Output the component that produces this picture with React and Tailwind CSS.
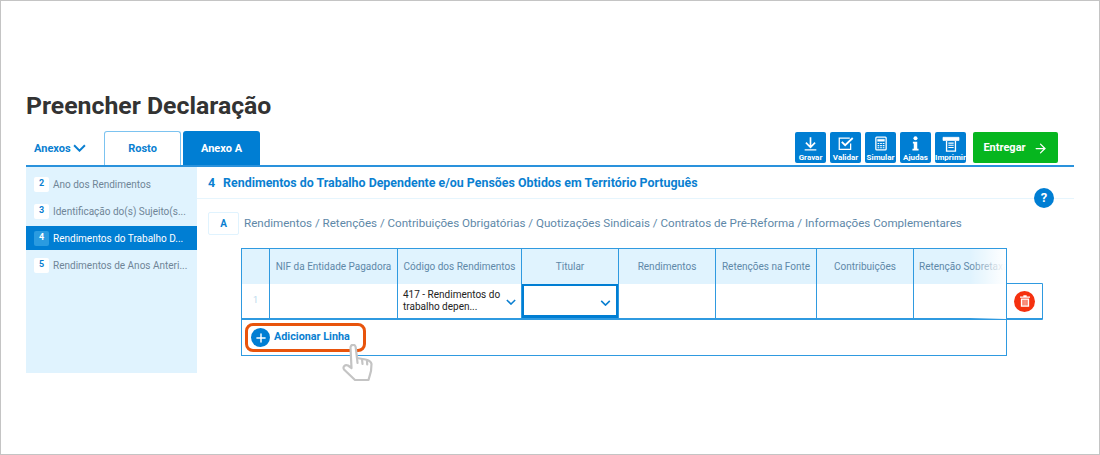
import React from 'react';
import { ArrowRight, Plus } from 'lucide-react';

const sections = [
  { n: 2, label: 'Ano dos Rendimentos' },
  { n: 3, label: 'Identificação do(s) Sujeito(s...' },
  { n: 4, label: 'Rendimentos do Trabalho D...', active: true },
  { n: 5, label: 'Rendimentos de Anos Anteri...' },
];

const GravarIcon = () => (
  <svg width="15" height="15" viewBox="0 0 18 17" fill="none" stroke="currentColor" strokeWidth="2">
    <path d="M9 1v11M3.500 7.500 9 13l5.500-5.500" />
    <path d="M2 16h14" strokeWidth="1.500" />
  </svg>
);

const ValidarIcon = () => (
  <svg width="16" height="15" viewBox="0 0 19 17" fill="none" stroke="currentColor">
    <path d="M15 8.500V15.500H1.500V2H14" strokeWidth="1.500" />
    <path d="M4.500 6.500 8.500 10.500 17.500 2" strokeWidth="2.200" />
  </svg>
);

const SimularIcon = () => (
  <svg width="12" height="15" viewBox="0 0 14 17" fill="none" stroke="currentColor">
    <rect x="1" y="1" width="12" height="15" rx="1" strokeWidth="1.500" />
    <path d="M3 3.500h8V6H3z" fill="currentColor" strokeWidth="0.500" />
    <path d="M3 8.500h2M6 8.500h2M9 8.500h2M3 11h2M6 11h2M9 11h2M3 13.500h2M6 13.500h2M9 13.500h2" strokeWidth="1.300" />
  </svg>
);

const AjudasIcon = () => (
  <svg width="7" height="15" viewBox="0 0 8 17" fill="currentColor">
    <circle cx="4" cy="2.500" r="2.300" />
    <path d="M1 6.500h5v8h1.500V16.500H.5V14.500H2V8.500H1z" />
  </svg>
);

const ImprimirIcon = () => (
  <svg width="18" height="16" viewBox="0 0 20 18" fill="none" stroke="currentColor">
    <path d="M1 1.500h18V5H1z" fill="currentColor" strokeWidth="0.800" />
    <path d="M5 5.500v11.500h10V5.500" strokeWidth="1.500" />
    <path d="M7 8h6M7 10.500h6M7 13h6" strokeWidth="1.200" />
  </svg>
);

const tools = [
  { label: 'Gravar', icon: <GravarIcon /> },
  { label: 'Validar', icon: <ValidarIcon /> },
  { label: 'Simular', icon: <SimularIcon /> },
  { label: 'Ajudas', icon: <AjudasIcon /> },
  { label: 'Imprimir', icon: <ImprimirIcon /> },
];

const headers = [
  { label: 'NIF da Entidade Pagadora', w: 'w-[128px]' },
  { label: 'Código dos Rendimentos', w: 'w-[124px]' },
  { label: 'Titular', w: 'w-[97px]' },
  { label: 'Rendimentos', w: 'w-[97px]' },
  { label: 'Retenções na Fonte', w: 'w-[101px]' },
  { label: 'Contribuições', w: 'w-[97px]' },
];

const Chevron = ({ className, w = 12, h = 7 }) => (
  <svg width={w} height={h} viewBox="0 0 12 7" fill="none" stroke="currentColor" strokeWidth="1.800" className={className}>
    <path d="M1 1l5 5 5-5" />
  </svg>
);

const TrashIcon = () => (
  <svg width="10" height="12" viewBox="0 0 12 14" fill="currentColor">
    <path d="M4 0h4v1.500h4V3H0V1.500h4z" />
    <path fillRule="evenodd" d="M1 4h10v10H1zM3 5.500v7h1.300v-7zM5.350 5.500v7h1.300v-7zM7.700 5.500v7H9v-7z" />
  </svg>
);

const HandCursor = () => (
  <svg width="32" height="38" viewBox="0 0 32 38" fill="#fff" stroke="#c4c4c4" strokeWidth="2.200" strokeLinejoin="round" strokeLinecap="round">
    <path d="M9.500 24 8.500 3.500a2.600 2.600 0 0 1 5.200-.2L15 14l8.500 1.500c3.500.8 5.500 1.500 6 4.500l-.5 7-2.500 9H13L2 25.500c-1.500-2.500 1-5.500 4-4z" />
    <path d="M15 14l.5 5M20 15l.5 5M25 16.500l.2 4" />
  </svg>
);

export default function App() {
  return (
    <div className="w-[1100px] h-[455px] overflow-hidden bg-white border border-[#c4c4c4] font-['Roboto',sans-serif]">
      <div className="pl-[25px] pr-[25px] pt-[91px]">
        <h1 className="text-[24.800px] leading-[28px] font-bold text-[#333333]">Preencher Declaração</h1>

        {/* Tabs and toolbar */}
        <div className="flex items-end h-[34px] mt-[11px]">
          <div className="w-[78px] h-[33px] pl-[8px] pt-[1px] flex items-center gap-[2px] text-[11px] font-bold text-[#0a7fd1]">
            Anexos <Chevron w={13} h={8} className="-mt-[2px]" />
          </div>
          <div className="w-[77px] h-[34px] pt-[2px] flex items-center justify-center border border-b-0 border-[#7cc3f0] rounded-t-[3px] text-[11px] font-bold text-[#0a7fd1]">
            Rosto
          </div>
          <div className="w-[77px] h-[34px] pt-[2px] ml-[2px] flex items-center justify-center rounded-t-[3px] bg-[#007ed3] text-[11px] font-bold text-white">
            Anexo A
          </div>
          <div className="ml-auto flex gap-[4px] mb-[2px] mr-[16px]">
            {tools.map((t) => (
              <div key={t.label} className="w-[31px] h-[31px] flex flex-col items-center pt-[3px] rounded-[2px] bg-[#007ed3] text-white overflow-hidden">
                <div className="h-[17px] flex items-center">{t.icon}</div>
                <span className="text-[8px] leading-[9px] font-bold mt-[1px] whitespace-nowrap">{t.label}</span>
              </div>
            ))}
            <div className="w-[85px] h-[31px] ml-[3px] pt-[1px] flex items-center justify-center gap-[7px] rounded-[2px] bg-[#06b61f] text-[11px] font-bold text-white">
              Entregar <ArrowRight size={15} strokeWidth={2} />
            </div>
          </div>
        </div>

        <div className="flex border-t-2 border-[#2a92dc]">
          {/* Side menu */}
          <div className="w-[171px] h-[206px] shrink-0 bg-[#e0f3fe] pt-[5px]">
            {sections.map((s) => (
              <div
                key={s.n}
                className={`h-[24px] mb-[3px] flex items-center pl-[8px] text-[10px] ${s.active ? 'bg-[#007ed3] text-white' : 'text-[#6f8597]'}`}
              >
                <span className={`w-[15px] h-[15px] mr-[4px] rounded-[2px] flex items-center justify-center text-[9px] font-bold ${s.active ? 'bg-[#2a9be0] text-white' : 'bg-white text-[#0a7fd1]'}`}>
                  {s.n}
                </span>
                <span className="whitespace-nowrap">{s.label}</span>
              </div>
            ))}
          </div>

          {/* Main content */}
          <div className="flex-1 relative">
            <div className="h-[32px] pl-[11px] pt-[1px] flex items-center border-b border-[#e6f5fd] text-[12.400px] font-bold text-[#0a7fd1]">
              <span className="mr-[8px]">4</span> Rendimentos do Trabalho Dependente e/ou Pensões Obtidos em Território Português
            </div>
            <div className="absolute right-[20px] top-[21px] w-[20px] h-[20px] rounded-full bg-[#007ed3] flex items-center justify-center text-[13px] font-bold text-white">
              ?
            </div>

            <div className="flex items-center mt-[12px] ml-[11px] h-[24px]">
              <span className="w-[31px] h-[23px] flex items-center justify-center border border-[#e0f3fe] rounded-[2px] text-[10px] font-bold text-[#0a7fd1]">A</span>
              <span className="ml-[5px] mt-[1px] text-[11.600px] text-[#5e88a8] whitespace-nowrap">
                Rendimentos / Retenções / Contribuições Obrigatórias / Quotizações Sindicais / Contratos de Pré-Reforma / Informações Complementares
              </span>
            </div>

            {/* Table */}
            <div className="relative ml-[44px] mt-[13px] w-[766px]">
              <div className="border border-[#2f9ae0]">
                <div className="flex border-b-2 border-[#2f9ae0]">
                  <div className="w-[28px] shrink-0 border-r border-[#2f9ae0]">
                    <div className="h-[35px] bg-[#e0f3fe]" />
                    <div className="h-[34px] flex items-center justify-center text-[9px] text-[#b8d8ec]">1</div>
                  </div>
                  {headers.map((h, i) => (
                    <div key={h.label} className={`${h.w} shrink-0 border-r border-[#2f9ae0]`}>
                      <div className="h-[35px] bg-[#e0f3fe] flex items-center justify-center text-[10px] text-[#5e88a8] whitespace-nowrap">{h.label}</div>
                      {i === 1 && (
                        <div className="h-[34px] pl-[5px] pr-[5px] flex items-center justify-between text-[10px] leading-[12px] text-[#222222]">
                          <span>417 - Rendimentos do<br />trabalho depen...</span>
                          <Chevron w={10} h={6} className="text-[#0a7fd1] shrink-0 mt-[2px]" />
                        </div>
                      )}
                      {i === 2 && (
                        <div className="h-[34px] pr-[5px] flex items-center justify-end border-2 border-[#007ed3] border-b-[3px] text-[#0a7fd1]">
                          <Chevron w={11} h={6} className="mt-[5px]" />
                        </div>
                      )}
                    </div>
                  ))}
                  <div className="flex-1 overflow-hidden">
                    <div className="h-[35px] pl-[5px] bg-[#e0f3fe] flex items-center text-[10px] text-[#5e88a8] whitespace-nowrap">Retenção Sobretaxa</div>
                  </div>
                </div>
                <div className="h-[35px] flex items-center">
                  <div className="relative ml-[3px] h-[29px] w-[121px] flex items-center pl-[3px] gap-[4px] border-[3px] border-[#e8540c] rounded-[8px] text-[10.800px] font-bold text-[#0a7fd1]">
                    <span className="w-[19px] h-[19px] rounded-full bg-[#007ed3] flex items-center justify-center text-white">
                      <Plus size={14} strokeWidth={2.500} />
                    </span>
                    Adicionar Linha
                  </div>
                </div>
              </div>

              {/* Fade over the clipped last header */}
              <div className="absolute right-px top-px w-[36px] h-[70px] bg-gradient-to-r from-transparent to-white" />

              {/* Delete cell */}
              <div className="absolute left-[765px] top-[35px] w-[37px] h-[37px] flex items-center justify-center border border-[#2f9ae0] border-b-2 bg-white rounded-r-[1px]">
                <span className="w-[21px] h-[21px] rounded-full bg-[#f5310f] flex items-center justify-center text-white">
                  <TrashIcon />
                </span>
              </div>

              {/* Hand cursor */}
              <div className="absolute left-[101px] top-[96px]">
                <HandCursor />
              </div>
            </div>
          </div>
        </div>
      </div>
    </div>
  );
}
